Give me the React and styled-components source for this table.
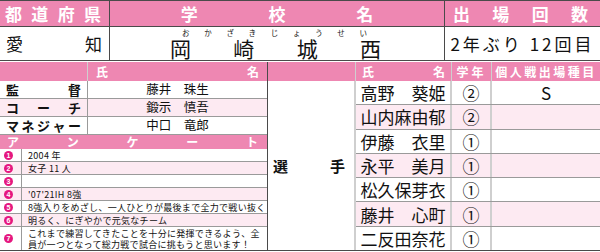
import React from "react";
import styled, { createGlobalStyle } from "styled-components";

const PINK = "#ee87b2";
const LIGHT = "#fdeaf2";
const DARK = "#4a4a4a";
const GRID = "#9a9a9a";
const SOFT = "#cfcfcf";
const MAGENTA = "#e5177f";

const GlobalStyle = createGlobalStyle`
  html, body {
    margin: 0;
    padding: 0;
    background: #fff;
  }
  body {
    font-family: "Noto Sans CJK JP", "Noto Sans", sans-serif;
    color: #111;
  }
  * {
    box-sizing: border-box;
  }
`;

const Sheet = styled.div`
  width: 600px;
  height: 252px;
  display: flex;
  flex-direction: column;
  overflow: hidden;
`;

const TopGrid = styled.div`
  display: grid;
  grid-template-columns: 110px 335px 155px;
  grid-template-rows: 26px 34px;
  border-top: 1px solid ${DARK};
  margin-bottom: 1px;
`;

const HeadCell = styled.div`
  display: flex;
  align-items: center;
  justify-content: ${(p) => p.$justify || "space-between"};
  padding: ${(p) => p.$pad || "0"};
  background: ${PINK};
  color: #fff;
  font-weight: bold;
  font-size: 17px;
  line-height: 1;
  border-bottom: 1px solid ${DARK};
  border-right: ${(p) => (p.$last ? "none" : `1px solid ${DARK}`)};
`;

const InfoCell = styled.div`
  display: flex;
  align-items: center;
  justify-content: ${(p) => p.$justify || "space-between"};
  padding: ${(p) => p.$pad || "0"};
  font-size: 17px;
  line-height: 1;
  border-bottom: 1px solid ${DARK};
  border-right: ${(p) => (p.$last ? "none" : `1px solid ${DARK}`)};
`;

const SchoolCell = styled.div`
  display: flex;
  flex-direction: column;
  justify-content: center;
  gap: 1px;
  padding-top: 1px;
  border-bottom: 1px solid ${DARK};
  border-right: 1px solid ${DARK};
`;

const Ruby = styled.div`
  display: flex;
  justify-content: space-between;
  padding: 0 77px 0 72px;
  font-size: 7.5px;
  line-height: 8px;
  height: 8px;
`;

const SchoolName = styled.div`
  display: flex;
  justify-content: space-between;
  padding: 0 63px 0 60px;
  font-size: 21px;
  line-height: 21px;
  height: 21px;
`;

const Count = styled.span`
  font-size: 17px;
  letter-spacing: 3px;
`;

const Bottom = styled.div`
  display: flex;
  height: 189px;
  border-bottom: 1px solid ${DARK};
`;

const LeftBlock = styled.div`
  width: 268px;
  display: flex;
  flex-direction: column;
  border-right: 1px solid ${DARK};
`;

const RightBlock = styled.div`
  flex: 1;
  display: flex;
  flex-direction: column;
`;

const Row = styled.div`
  display: flex;
  flex: ${(p) => (p.$h ? `0 0 ${p.$h}px` : "1")};
  background: ${(p) => (p.$pink ? PINK : p.$tint ? LIGHT : "#fff")};
  border-bottom: ${(p) => (p.$noline ? "none" : `1px solid ${GRID}`)};
`;

const SubHead = styled.div`
  display: flex;
  align-items: center;
  justify-content: ${(p) => p.$justify || "space-between"};
  width: ${(p) => (p.$w ? `${p.$w}px` : "auto")};
  flex: ${(p) => (p.$w ? "none" : "1")};
  padding: ${(p) => p.$pad || "0"};
  color: #fff;
  font-weight: bold;
  font-size: 12px;
  line-height: 1;
  letter-spacing: ${(p) => p.$ls || "0"};
  border-right: ${(p) => (p.$last ? "none" : `1px solid ${SOFT}`)};
`;

const Label = styled.div`
  width: 88px;
  display: flex;
  align-items: center;
  justify-content: space-between;
  padding: 0 6px;
  font-weight: bold;
  font-size: 13px;
  line-height: 1;
  border-right: 1px solid ${GRID};
`;

const StaffName = styled.div`
  flex: 1;
  display: flex;
  align-items: center;
  justify-content: center;
  font-size: 12.5px;
  line-height: 1;
`;

const NumCell = styled.div`
  width: 22px;
  display: flex;
  align-items: center;
  padding-left: 4px;
  border-right: 1px solid ${GRID};
`;

const Badge = styled.span`
  width: 9px;
  height: 9px;
  border-radius: 50%;
  background: ${MAGENTA};
  color: #fff;
  font: bold 7px/9px "Liberation Sans", sans-serif;
  text-align: center;
`;

const Answer = styled.div`
  flex: 1;
  display: flex;
  align-items: center;
  padding-left: 6px;
  font-size: 9px;
  line-height: 11px;
  letter-spacing: 0.3px;
`;

const PlayersBody = styled.div`
  flex: 1;
  display: flex;
`;

const PlayerLabel = styled.div`
  width: 88px;
  display: flex;
  align-items: center;
  justify-content: space-between;
  padding: 0 9px 0 5px;
  font-weight: bold;
  font-size: 15px;
  line-height: 1;
  border-right: 2px solid ${SOFT};
`;

const PlayerList = styled.div`
  flex: 1;
  display: flex;
  flex-direction: column;
`;

const Cell = styled.div`
  width: ${(p) => (p.$w ? `${p.$w}px` : "auto")};
  flex: ${(p) => (p.$w ? "none" : "1")};
  display: flex;
  align-items: center;
  justify-content: center;
  font-size: 17px;
  line-height: 1;
  border-right: ${(p) => (p.$last ? "none" : `2px solid ${SOFT}`)};
`;

const Spread = ({ text }) => [...text].map((c, i) => <span key={i}>{c}</span>);

const staff = [
  ["監督", "藤井　珠生"],
  ["コーチ", "鍛示　慎吾"],
  ["マネジャー", "中口　竜郎"],
];

const answers = [
  "2004 年",
  "女子 11 人",
  "",
  "'07'21IH 8強",
  "8強入りをめざし、一人ひとりが最後まで全力で戦い抜く",
  "明るく、にぎやかで元気なチーム",
  "これまで練習してきたことを十分に発揮できるよう、全員が一つとなって総力戦で試合に挑もうと思います！",
];

const players = [
  ["高野　葵姫", "②", "S"],
  ["山内麻由郁", "②", ""],
  ["伊藤　衣里", "①", ""],
  ["永平　美月", "①", ""],
  ["松久保芽衣", "①", ""],
  ["藤井　心町", "①", ""],
  ["二反田奈花", "①", ""],
];

const App = () => {
  return (
    <Sheet>
      <GlobalStyle />
      <TopGrid>
        <HeadCell $pad="0 8px 0 5px">
          <Spread text="都道府県" />
        </HeadCell>
        <HeadCell $justify="space-evenly">
          <Spread text="学校名" />
        </HeadCell>
        <HeadCell $pad="0 12px 0 8px" $last>
          <Spread text="出場回数" />
        </HeadCell>
        <InfoCell $pad="0 7px 0 6px">
          <Spread text="愛知" />
        </InfoCell>
        <SchoolCell>
          <Ruby>
            <Spread text="おかざきじょうせい" />
          </Ruby>
          <SchoolName>
            <Spread text="岡崎城西" />
          </SchoolName>
        </SchoolCell>
        <InfoCell $justify="center" $last>
          <Count>2年ぶり 12回目</Count>
        </InfoCell>
      </TopGrid>

      <Bottom>
        <LeftBlock>
          <Row $h={19} $pink $noline>
            <SubHead $w={88} />
            <SubHead $pad="0 8px 0 8px" $last>
              <Spread text="氏名" />
            </SubHead>
          </Row>
          {staff.map(([role, name], i) => (
            <Row key={role} $h={18} $tint={i === 1}>
              <Label>
                <Spread text={role} />
              </Label>
              <StaffName>{name}</StaffName>
            </Row>
          ))}
          <Row $h={14} $pink $noline>
            <SubHead $pad="0 9px 0 7px" $last>
              <Spread text="アンケート" />
            </SubHead>
          </Row>
          {answers.map((a, i) => (
            <Row key={i} $h={i < 6 ? 13 : 0} $tint={i % 2 === 1} $noline={i === 6}>
              <NumCell>
                <Badge>{i + 1}</Badge>
              </NumCell>
              <Answer>{a}</Answer>
            </Row>
          ))}
        </LeftBlock>

        <RightBlock>
          <Row $h={19} $pink $noline>
            <SubHead $w={88} />
            <SubHead $w={96} $pad="0 6px 0 6px">
              <Spread text="氏名" />
            </SubHead>
            <SubHead $w={40} $justify="center" $ls="3px">
              学年
            </SubHead>
            <SubHead $justify="center" $ls="2.5px" $last>
              個人戦出場種目
            </SubHead>
          </Row>
          <PlayersBody>
            <PlayerLabel>
              <Spread text="選手" />
            </PlayerLabel>
            <PlayerList>
              {players.map(([name, grade, event], i) => (
                <Row key={name} $tint={i % 2 === 1} $noline={i === 6}>
                  <Cell $w={96}>{name}</Cell>
                  <Cell $w={40}>{grade}</Cell>
                  <Cell $last>{event}</Cell>
                </Row>
              ))}
            </PlayerList>
          </PlayersBody>
        </RightBlock>
      </Bottom>
    </Sheet>
  );
};

export default App;
